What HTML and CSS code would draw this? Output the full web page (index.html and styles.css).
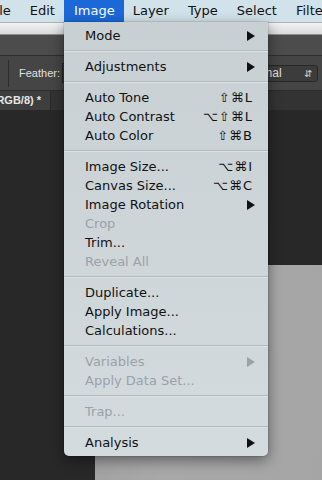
FILE: index.html
```html
<!DOCTYPE html>
<html lang="en">
<head>
    <meta charset="UTF-8">
    <meta name="viewport" content="width=device-width, initial-scale=1.0">
    <title>Image menu</title>
    <link rel="stylesheet" href="styles.css">
</head>
<body>
    <!-- Системне меню -->
    <div class="menubar">
        <span class="menubar-item first">File</span>
        <span class="menubar-item">Edit</span>
        <span class="menubar-item active">Image</span>
        <span class="menubar-item">Layer</span>
        <span class="menubar-item">Type</span>
        <span class="menubar-item">Select</span>
        <span class="menubar-item">Filter</span>
    </div>

    <div class="titlebar"></div>
    <div class="appbar"></div>

    <div class="options">
        <div class="options-sep"></div>
        <span class="options-label">Feather:</span>
        <div class="options-input"></div>
        <div class="options-spacer"></div>
        <div class="options-select">
            <span>Normal</span>
            <span class="select-arrows">&#8693;</span>
        </div>
    </div>

    <div class="tabs">
        <div class="tab"><span class="tab-title">(RGB/8) *</span></div>
    </div>

    <div class="workspace">
        <div class="canvas"></div>
    </div>

    <!-- Випадаюче меню Image -->
    <div class="menu">
        <div class="menu-item"><span>Mode</span><i class="arrow"></i></div>
        <div class="menu-sep"></div>
        <div class="menu-item"><span>Adjustments</span><i class="arrow"></i></div>
        <div class="menu-sep"></div>
        <div class="menu-item"><span>Auto Tone</span><span class="key">&#8679;&#8984;L</span></div>
        <div class="menu-item"><span>Auto Contrast</span><span class="key">&#8997;&#8679;&#8984;L</span></div>
        <div class="menu-item"><span>Auto Color</span><span class="key">&#8679;&#8984;B</span></div>
        <div class="menu-sep"></div>
        <div class="menu-item"><span>Image Size...</span><span class="key">&#8997;&#8984;I</span></div>
        <div class="menu-item"><span>Canvas Size...</span><span class="key">&#8997;&#8984;C</span></div>
        <div class="menu-item"><span>Image Rotation</span><i class="arrow"></i></div>
        <div class="menu-item disabled"><span>Crop</span></div>
        <div class="menu-item"><span>Trim...</span></div>
        <div class="menu-item disabled"><span>Reveal All</span></div>
        <div class="menu-sep"></div>
        <div class="menu-item"><span>Duplicate...</span></div>
        <div class="menu-item"><span>Apply Image...</span></div>
        <div class="menu-item"><span>Calculations...</span></div>
        <div class="menu-sep"></div>
        <div class="menu-item disabled"><span>Variables</span><i class="arrow"></i></div>
        <div class="menu-item disabled"><span>Apply Data Set...</span></div>
        <div class="menu-sep"></div>
        <div class="menu-item disabled"><span>Trap...</span></div>
        <div class="menu-sep"></div>
        <div class="menu-item"><span>Analysis</span><i class="arrow"></i></div>
    </div>
</body>
</html>
```

FILE: styles.css
```css
/* Загальні стилі */
body {
    margin: 0;
    width: 322px;
    height: 480px;
    overflow: hidden;
    background-color: #282828;
    font-family: 'DejaVu Sans', sans-serif;
    position: relative;
}

/* Рядок меню */
.menubar {
    height: 22px;
    background-color: #d2e2ea;
    border-bottom: 1px solid #aab4b9;
    display: flex;
    white-space: nowrap;
    overflow: hidden;
    font-size: 13px;
    line-height: 22px;
    color: #111;
}

.menubar-item {
    padding: 0 9px 0 10px;
    flex-shrink: 0;
}

.menubar-item.first {
    margin-left: -21px;
}

.menubar-item.active {
    background-color: #1b69d8;
    color: #fff;
    padding: 0 9px 0 10px;
    margin-right: -1px;
}

/* Заголовок вікна */
.titlebar {
    height: 11px;
    background: linear-gradient(#f2f2f2, #dadada);
    border-bottom: 1px solid #8e8e8e;
}

.appbar {
    height: 20px;
    background-color: #4c4c4c;
    border-bottom: 1px solid #2f2f2f;
}

/* Панель параметрів */
.options {
    height: 34px;
    background-color: #454545;
    border-bottom: 1px solid #2c2c2c;
    display: flex;
    align-items: center;
    font-family: 'Liberation Sans', sans-serif;
    font-size: 11px;
    color: #e2e2e2;
}

.options-sep {
    width: 1px;
    height: 27px;
    background-color: #2e2e2e;
    margin-left: 8px;
    margin-right: 10px;
}

.options-label {
    width: 43px;
}

.options-input {
    width: 20px;
    height: 18px;
    background-color: #3a3a3a;
    border: 1px solid #262626;
}

.options-spacer {
    flex: 1;
}

.options-select {
    width: 80px;
    height: 17px;
    margin-right: 4px;
    background-color: #3c3c3c;
    border: 1px solid #272727;
    border-radius: 3px;
    display: flex;
    justify-content: space-between;
    align-items: center;
    padding: 0 5px 0 4px;
    box-sizing: border-box;
    font-size: 12px;
}

.select-arrows {
    font-size: 10px;
    color: #cfcfcf;
}

/* Вкладки документів */
.tabs {
    height: 19px;
    background-color: #333;
    display: flex;
}

.tab {
    width: 51px;
    background-color: #3e3e3e;
    border-right: 1px solid #2a2a2a;
    display: flex;
    justify-content: flex-end;
    overflow: hidden;
    padding-right: 9px;
    box-sizing: border-box;
}

.tab-title {
    flex-shrink: 0;
    font-family: 'Liberation Sans', sans-serif;
    font-weight: bold;
    font-size: 11px;
    color: #e6e6e6;
    line-height: 19px;
    white-space: nowrap;
}

/* Робоча область */
.workspace {
    height: 370px;
    padding: 155px 0 0 95px;
    box-sizing: border-box;
}

.canvas {
    height: 100%;
    background: linear-gradient(100deg, #9f9f9f, #a9a8a9 40%, #a6a5a6);
}

/* Випадаюче меню */
.menu {
    position: absolute;
    left: 64px;
    top: 22px;
    width: 204px;
    padding: 4px 0;
    background: linear-gradient(#c8d0d4, #d4dbdf);
    border-radius: 0 0 5px 5px;
    box-shadow: 0 4px 14px rgba(0, 0, 0, 0.45), 0 0 0 1px rgba(0, 0, 0, 0.08);
    font-size: 13px;
    color: #111;
}

.menu-item {
    height: 19px;
    line-height: 19px;
    padding: 0 16px 0 21px;
    display: flex;
    justify-content: space-between;
    align-items: center;
    white-space: nowrap;
}

.menu-item.disabled {
    color: #9aa2a7;
}

.key {
    letter-spacing: 1px;
    margin-right: -1px;
}

/* Стрілка підменю */
.arrow {
    width: 0;
    height: 0;
    border-left: 8px solid #111;
    border-top: 5px solid transparent;
    border-bottom: 5px solid transparent;
    margin-right: -3px;
}

.disabled .arrow {
    border-left-color: #9aa2a7;
}

.menu-sep {
    height: 1px;
    margin: 5px 0 6px;
    background-color: #b2b9bd;
    box-shadow: 0 1px 0 #dde3e6;
}
```
